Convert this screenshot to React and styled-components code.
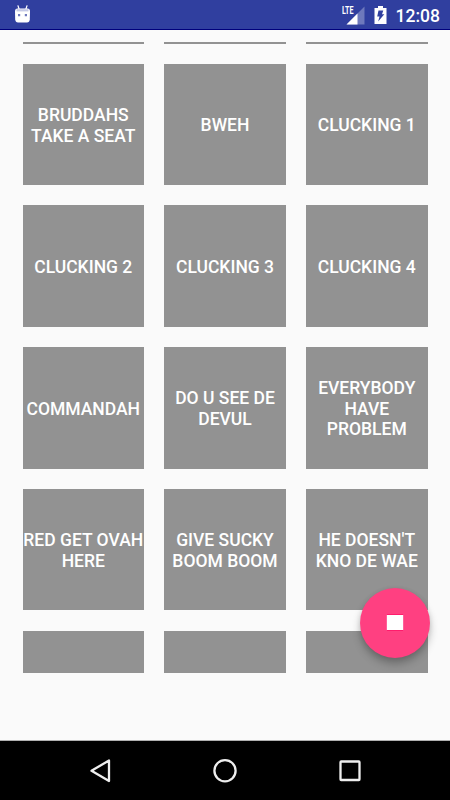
import React from "react";
import styled, { createGlobalStyle } from "styled-components";

const GlobalStyle = createGlobalStyle`
  * {
    box-sizing: border-box;
  }

  body {
    margin: 0;
    background: #fafafa;
    font-family: Roboto, "Liberation Sans", sans-serif;
  }
`;

const Screen = styled.div`
  position: relative;
  display: flex;
  flex-direction: column;
  width: 450px;
  height: 800px;
  overflow: hidden;
  background: #fafafa;
`;

const StatusBar = styled.header`
  display: flex;
  flex: none;
  align-items: center;
  height: 30px;
  padding: 0 10px 0 14px;
  background: #303f9f;
  border-bottom: 1px solid #00007c;
  color: #fff;
`;

const StatusIcons = styled.div`
  display: flex;
  align-items: center;
  margin-left: auto;
`;

const Network = styled.svg`
  display: block;
  margin-right: 9px;
`;

const Clock = styled.span`
  width: 45px;
  margin-left: 8px;
  padding-top: 2px;
  font-size: 17.5px;
  font-weight: 500;
  line-height: 20px;
  text-align: right;
  white-space: nowrap;
`;

const Board = styled.main`
  flex: none;
  height: 631px;
  margin-top: 12.4px;
  overflow: hidden;
`;

const Grid = styled.div`
  display: grid;
  grid-template-columns: repeat(3, 121.5px);
  grid-auto-rows: 121.5px;
  gap: 20.2px 20.25px;
  margin-top: -120.3px;
  padding: 0 22.5px;
`;

const Tile = styled.button`
  display: flex;
  align-items: center;
  justify-content: center;
  min-width: 0;
  padding: 2px 0 0;
  border: 0;
  background: #929292;
  color: #fff;
  font-family: inherit;
  font-size: 17.5px;
  font-weight: 500;
  line-height: 20.5px;
  text-align: center;
  text-transform: uppercase;
`;

const StopButton = styled.button`
  position: absolute;
  top: 588px;
  left: 360px;
  display: flex;
  align-items: center;
  justify-content: center;
  width: 70px;
  height: 70px;
  padding: 0 0 1px;
  border: 0;
  border-radius: 50%;
  background: #ff4081;
  box-shadow: 0 6px 9px rgba(0, 0, 0, 0.24), 0 1px 5px rgba(0, 0, 0, 0.1);
`;

const StopIcon = styled.span`
  width: 18px;
  height: 17px;
  background: #fff;
  border: 1px solid #ff1c6c;
  border-width: 1px;
  border-left-color: #ff609a;
  border-right-color: #ff609a;
`;

const NavBar = styled.nav`
  display: flex;
  flex: none;
  align-items: center;
  justify-content: center;
  gap: 95px;
  height: 60px;
  margin-top: auto;
  background: #000;
  border-top: 1px solid #b0b0b0;
`;

const NavIcon = styled.svg`
  display: block;
  width: 30px;
  height: 30px;
  fill: none;
  stroke: #eee;
  stroke-width: 2.3;
  stroke-linejoin: round;
`;

const sounds = [
  "Bruddahs take a seat",
  "Bweh",
  "Clucking 1",
  "Clucking 2",
  "Clucking 3",
  "Clucking 4",
  "Commandah",
  "Do u see de devul",
  "Everybody have problem",
  "Red get ovah here",
  "Give sucky boom boom",
  "He doesn't kno de wae",
];

// rows scrolled partly out of view above and below the named sounds
const tiles = ["", "", "", ...sounds, "", "", ""];

const DebugIcon = () => (
  <svg width="17" height="20" viewBox="0 0 17 20">
    <path
      d="M4 .8l1.300 4M13 .8l-1.300 4"
      stroke="#fff"
      strokeWidth="1.2"
      strokeLinecap="round"
    />
    <path
      d="M3.500 3.500h10Q16 3.500 16 6.500l-.2 8Q15.500 17.500 13 17.500H4Q1.500 17.500 1.200 14.500L1 6.500Q1 3.500 3.500 3.500z"
      fill="#fff"
    />
    <path d="M2.500 4.200h12v2.200h-12z" fill="#c5c9e6" />
    <path d="M4 9h2.200v2.200H4zM10.800 9H13v2.200h-2.200z" fill="#6f7abd" />
  </svg>
);

const SignalIcon = () => (
  <Network width="23" height="20" viewBox="0 0 23 20">
    <path d="M22.500 1.500v18H4.500z" fill="#fff" fillOpacity="0.3" />
    <path d="M15.500 8.500v11h-11z" fill="#fff" />
    <text
      x="0"
      y="9"
      fill="#fff"
      fontFamily="Roboto"
      fontSize="10.5"
      fontWeight="700"
      textLength="11.5"
      lengthAdjust="spacingAndGlyphs"
    >
      LTE
    </text>
  </Network>
);

const BatteryIcon = () => (
  <svg width="13" height="18" viewBox="0 0 13 18">
    <path d="M4 0h5v2h3.500v16H.5V2H4z" fill="#fff" />
    <path
      d="M4.500 4.500h4.800L8 8.200h2.300L4.200 15.500l1.300-5H3.200z"
      fill="#303f9f"
    />
  </svg>
);

const App = () => (
  <>
    <GlobalStyle />
    <Screen>
      <StatusBar>
        <DebugIcon />
        <StatusIcons>
          <SignalIcon />
          <BatteryIcon />
          <Clock>12:08</Clock>
        </StatusIcons>
      </StatusBar>
      <Board>
        <Grid>
          {tiles.map((name, i) => (
            <Tile key={i}>{name}</Tile>
          ))}
        </Grid>
      </Board>
      <StopButton aria-label="Stop">
        <StopIcon />
      </StopButton>
      <NavBar>
        <NavIcon viewBox="0 0 30 30">
          <path d="M24 4.500v20.500L6.500 14.800z" />
        </NavIcon>
        <NavIcon viewBox="0 0 30 30">
          <circle cx="15" cy="14.700" r="10.600" />
        </NavIcon>
        <NavIcon viewBox="0 0 30 30">
          <rect x="5.500" y="5.500" width="19" height="18.500" rx="0.700" />
        </NavIcon>
      </NavBar>
    </Screen>
  </>
);

export default App;
